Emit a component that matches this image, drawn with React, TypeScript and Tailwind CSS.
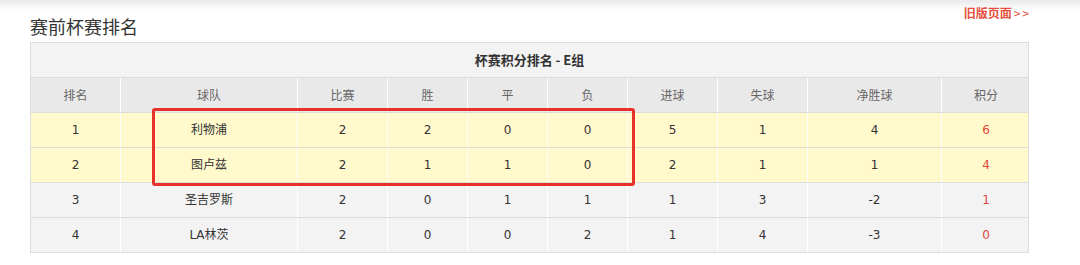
const cols = [
  { label: "排名", w: "w-[89px]" },
  { label: "球队", w: "w-[177px]" },
  { label: "比赛", w: "w-[90px]" },
  { label: "胜", w: "w-[80px]" },
  { label: "平", w: "w-[80px]" },
  { label: "负", w: "w-[80px]" },
  { label: "进球", w: "w-[90px]" },
  { label: "失球", w: "w-[90px]" },
  { label: "净胜球", w: "w-[134px]" },
  { label: "积分", w: "w-[89px]" },
];

const rows = [
  { hl: true, cells: ["1", "利物浦", "2", "2", "0", "0", "5", "1", "4", "6"] },
  { hl: true, cells: ["2", "图卢兹", "2", "1", "1", "0", "2", "1", "1", "4"] },
  { hl: false, cells: ["3", "圣吉罗斯", "2", "0", "1", "1", "1", "3", "-2", "1"] },
  { hl: false, cells: ["4", "LA林茨", "2", "0", "0", "2", "1", "4", "-3", "0"] },
];

export default function App() {
  return (
    <div className="relative h-[265px] w-[1080px] overflow-hidden bg-white font-['DejaVu_Sans','Noto_Sans_CJK_SC',sans-serif] text-[12px] text-[#333]">
      <div className="h-[10px] bg-gradient-to-b from-[#e9e9e9] to-white" />
      <div className="flex w-[1031px] justify-between pl-[30px]">
        <h2 className="mt-[4px] font-['Noto_Sans_CJK_SC',sans-serif] text-[18px] leading-[24px] text-[#333]">赛前杯赛排名</h2>
        <a className="-mt-[6px] font-['Noto_Sans_CJK_SC',sans-serif] text-[12px] font-bold leading-[18px] text-[#e5503c]">
          旧版页面<span className="ml-[2px] font-normal tracking-[2px]">&gt;&gt;</span>
        </a>
      </div>
      <div className="ml-[30px] mt-[4px] w-[999px] border border-[#dddddd]">
        <div className="flex h-[34px] items-center justify-center bg-[#f3f3f3] font-['Noto_Sans_CJK_SC',sans-serif] text-[13px] font-bold text-[#333]">
          杯赛积分排名 - E组
        </div>
        <div className="flex h-[35px] border-t border-[#dddddd] bg-[#e9e9e9] font-['Noto_Sans_CJK_SC',sans-serif] text-[#666]">
          {cols.map((c, i) => (
            <div key={c.label} className={`${c.w} flex shrink-0 items-center justify-center ${i > 0 ? "border-l border-white" : ""}`}>
              {c.label}
            </div>
          ))}
        </div>
        {rows.map((r) => (
          <div key={r.cells[0]} className={`flex h-[35px] border-t border-[#dddddd] ${r.hl ? "bg-[#fff9cc]" : "bg-[#f3f3f3]"}`}>
            {r.cells.map((v, i) => (
              <div
                key={i}
                className={`${cols[i].w} flex shrink-0 items-center justify-center ${i > 0 ? "border-l border-white" : ""} ${i === 9 ? "text-[#e0463b]" : "text-[#333]"}`}
              >
                {v}
              </div>
            ))}
          </div>
        ))}
      </div>
      <div className="pointer-events-none absolute left-[152px] top-[108px] h-[78px] w-[483px] rounded-[3px] border-[3px] border-[#e8312a]" />
    </div>
  );
}
